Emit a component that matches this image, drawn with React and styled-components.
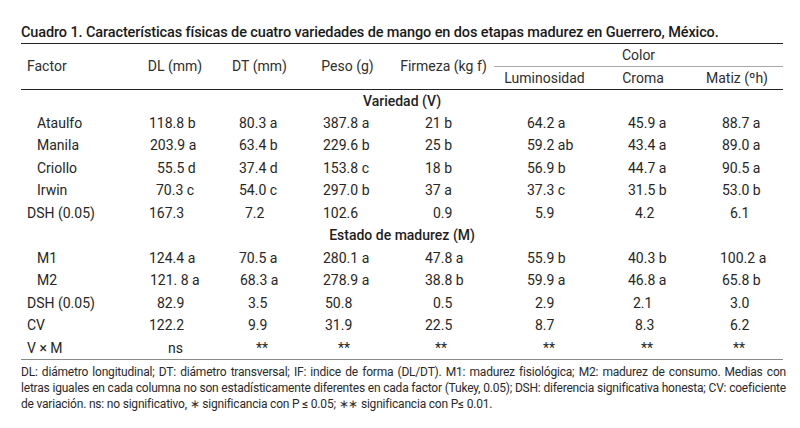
import React from 'react'
import styled, { createGlobalStyle } from 'styled-components';

const GlobalStyle = createGlobalStyle`
  body {
    margin: 0;
    background: #fff;
    color: #262626;
    font-family: Roboto, "Liberation Sans", Arial, sans-serif;
  }
`;

// left edge of each data column inside its cell (px from the cell's left side)
const colPad = [16, 22, 21, 32, 33, 33, 31];
const colWidths = [112, 84, 85, 91, 101, 101, 96, 92];

const varieties = [
  ['Ataulfo', [['118.8 b', 0], ['80.3 a', 0], ['387.8 a', 0], ['21 b', 0], ['64.2 a', 0], ['45.9 a', 0], ['88.7 a', 0]]],
  ['Manila', [['203.9 a', 1], ['63.4 b', 0], ['229.6 b', 0], ['25 b', 0], ['59.2 ab', 0], ['43.4 a', 0], ['89.0 a', 0]]],
  ['Criollo', [['55.5 d', 8], ['37.4 d', 0], ['153.8 c', 0], ['18 b', 0], ['56.9 b', 0], ['44.7 a', 0], ['90.5 a', 0]]],
  ['Irwin', [['70.3 c', 7], ['54.0 c', 0], ['297.0 b', 0], ['37 a', 0], ['37.3 c', 0], ['31.5 b', 0], ['53.0 b', 0]]],
];

const maturity = [
  ['M1', [['124.4 a', 0], ['70.5 a', 0], ['280.1 a', 0], ['47.8 a', 0], ['55.9 b', 0], ['40.3 b', 0], ['100.2 a', -2]]],
  ['M2', [['121. 8 a', 1], ['68.3 a', 1], ['278.9 a', 0], ['38.8 b', 0], ['59.9 a', 0], ['46.8 a', 0], ['65.8 b', 0]]],
];

const dshV = [['167.3', 0], ['7.2', 6], ['102.6', 0], ['0.9', 8], ['5.9', 8], ['4.2', 7], ['6.1', 8]];
const dshM = [['82.9', 8], ['3.5', 9], ['50.8', 2], ['0.5', 8], ['2.9', 8], ['2.1', 5], ['3.0', 8]];
const cv = [['122.2', 0], ['9.9', 9], ['31.9', 2], ['22.5', 0], ['8.7', 8], ['8.3', 7], ['6.2', 8]];
const interaction = [['ns', 19], ['**', 17], ['**', 15], ['**', 10], ['**', 16], ['**', 13], ['**', 11]];

const Page = styled.div`
  padding: 23px 0 0 21px;
`;

const Caption = styled.h1`
  margin: 0;
  width: 762px;
  font-size: 14.5px;
  font-weight: 500;
  letter-spacing: -0.12px;
  line-height: 20px;
  color: #1a1a1a;
  border-bottom: 1.5px solid #222;
`;

const Table = styled.table`
  width: 762px;
  border-collapse: collapse;
  table-layout: fixed;
  font-size: 14px;
  line-height: 16px;
`;

const HeadRow = styled.tr`
  height: 22.5px;
`;

const HeadCell = styled.th`
  padding: ${p => (p.$left ? '0 0 0 6px' : '0')};
  font-weight: 400;
  text-align: ${p => (p.$left ? 'left' : 'center')};
  white-space: nowrap;
  color: #2e2e2e;
  border-bottom: ${p => (p.$span ? '1.5px solid #a8a8a8' : 'none')};
`;

const HeadBody = styled.thead`
  border-bottom: 1.5px solid #222;
`;

const Row = styled.tr`
  height: 22.5px;
  border-bottom: ${p => (p.$last ? '1.5px solid #8a8a8a' : 'none')};
`;

const Section = styled.td`
  padding: 0;
  text-align: center;
  font-weight: 500;
  color: #1e1e1e;
`;

const Label = styled.td`
  padding: 0 0 0 ${p => (p.$sub ? 16 : 6)}px;
  white-space: nowrap;
`;

const Cell = styled.td`
  padding: 0 0 0 ${p => p.$pad}px;
  white-space: pre;
`;

const Notes = styled.div`
  width: 765px;
  margin-top: 4px;
  font-size: 12px;
  line-height: 16px;
  color: #2a2a2a;
`;

const NoteLine = styled.span`
  display: block;
  white-space: nowrap;
  letter-spacing: -0.2px;
  text-align: ${p => (p.$last ? 'left' : 'justify')};
  text-align-last: ${p => (p.$last ? 'left' : 'justify')};
`;

const DataRow = ({ label, values, sub, last }) => (
  <Row $last={last}>
    <Label $sub={sub}>{label}</Label>
    {values.map(([v, o], i) => (
      <Cell key={i} $pad={colPad[i] + o}>{v}</Cell>
    ))}
  </Row>
);

const App = () => {
  return (
    <Page>
      <GlobalStyle />
      <Caption>Cuadro 1. Características físicas de cuatro variedades de mango en dos etapas madurez en Guerrero, México.</Caption>
      <Table>
        <colgroup>
          {colWidths.map((w, i) => <col key={i} style={{ width: w }} />)}
        </colgroup>
        <HeadBody>
          <HeadRow>
            <HeadCell $left rowSpan={2}>Factor</HeadCell>
            <HeadCell rowSpan={2}>DL (mm)</HeadCell>
            <HeadCell rowSpan={2}>DT (mm)</HeadCell>
            <HeadCell rowSpan={2}>Peso (g)</HeadCell>
            <HeadCell rowSpan={2}>Firmeza (kg f)</HeadCell>
            <HeadCell $span colSpan={3}>Color</HeadCell>
          </HeadRow>
          <HeadRow>
            <HeadCell>Luminosidad</HeadCell>
            <HeadCell>Croma</HeadCell>
            <HeadCell>Matiz (ºh)</HeadCell>
          </HeadRow>
        </HeadBody>
        <tbody>
          <Row><Section colSpan={8}>Variedad (V)</Section></Row>
          {varieties.map(([name, vals]) => (
            <DataRow key={name} label={name} values={vals} sub />
          ))}
          <DataRow label="DSH (0.05)" values={dshV} />
          <Row><Section colSpan={8}>Estado de madurez (M)</Section></Row>
          {maturity.map(([name, vals]) => (
            <DataRow key={name} label={name} values={vals} sub />
          ))}
          <DataRow label="DSH (0.05)" values={dshM} />
          <DataRow label="CV" values={cv} />
          <DataRow label="V × M" values={interaction} last />
        </tbody>
      </Table>
      <Notes>
        <NoteLine>DL: diámetro longitudinal; DT: diámetro transversal; IF: indice de forma (DL/DT). M1: madurez fisiológica; M2: madurez de consumo. Medias con</NoteLine>
        <NoteLine>letras iguales en cada columna no son estadísticamente diferentes en cada factor (Tukey, 0.05); DSH: diferencia significativa honesta; CV: coeficiente</NoteLine>
        <NoteLine $last>de variación. ns: no significativo, ∗ significancia con P ≤ 0.05; ∗∗ significancia con P≤ 0.01.</NoteLine>
      </Notes>
    </Page>
  )
}

export default App
